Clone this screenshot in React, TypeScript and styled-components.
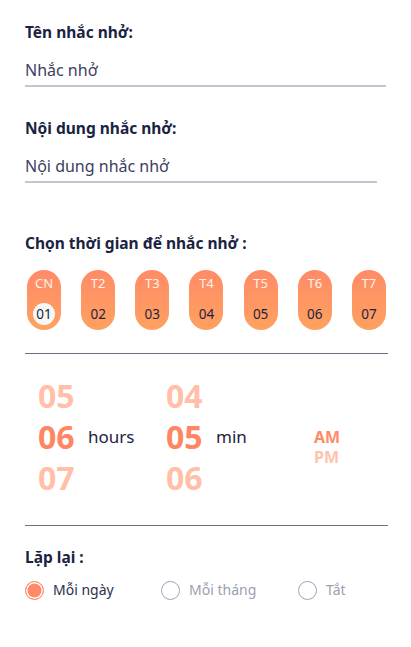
import { useState } from "react";
import styled, { createGlobalStyle } from "styled-components";

const GlobalStyle = createGlobalStyle`
  body {
    margin: 0;
    background: #ffffff;
    font-family: "Noto Sans", "Open Sans", sans-serif;
  }
`;

const Page = styled.div`
  display: flex;
  flex-direction: column;
  padding: 22px 23px 40px 25px;
  width: 411px;
  box-sizing: border-box;
`;

const Label = styled.div<{ $top?: number }>`
  margin-top: ${({ $top }) => $top ?? 0}px;
  font-size: 15.5px;
  line-height: 20px;
  font-weight: 700;
  color: #1a2340;
`;

const TextInput = styled.input<{ $width: number }>`
  margin-top: 17px;
  width: ${({ $width }) => $width}px;
  box-sizing: border-box;
  border: none;
  border-bottom: 2px solid #c3c6d1;
  padding: 0 0 4px 0;
  font-family: inherit;
  font-size: 16px;
  line-height: 22px;
  color: #3a4060;
  outline: none;
  background: transparent;

  &::placeholder {
    color: #3a4060;
  }
`;

const DayRow = styled.div`
  margin-top: 17px;
  display: flex;
  justify-content: space-between;
  padding: 0 2px 0 2px;
`;

const DayPill = styled.button`
  width: 34px;
  height: 60px;
  border: none;
  border-radius: 17px;
  padding: 4px 0 5px 0;
  display: flex;
  flex-direction: column;
  align-items: center;
  justify-content: space-between;
  background: linear-gradient(180deg, #ff8b68 0%, #ffa15f 100%);
  font-family: inherit;
  cursor: pointer;
`;

const DayName = styled.span`
  font-size: 13px;
  line-height: 18px;
  color: #fff1ea;
`;

const DayNumber = styled.span<{ $active: boolean }>`
  width: 22px;
  height: 22px;
  border-radius: 50%;
  display: flex;
  align-items: center;
  justify-content: center;
  font-size: 13.5px;
  color: #1a2340;
  background: ${({ $active }) => ($active ? "#f7f7f7" : "transparent")};
`;

const Divider = styled.hr<{ $top: number }>`
  margin: ${({ $top }) => $top}px 0 0 0;
  width: 363px;
  border: none;
  border-top: 1px solid #6b6f82;
`;

const TimePicker = styled.div`
  margin-top: 21px;
  padding-left: 13px;
  display: flex;
  align-items: center;
`;

const Wheel = styled.div<{ $width: number }>`
  width: ${({ $width }) => $width}px;
  display: flex;
  align-items: center;
`;

const Digits = styled.div`
  display: flex;
  flex-direction: column;
  width: 50px;
`;

const Digit = styled.div<{ $current: boolean }>`
  height: 41px;
  font-size: 32px;
  line-height: 41px;
  font-weight: 700;
  color: ${({ $current }) => ($current ? "#ff8662" : "#ffbfa9")};
`;

const Unit = styled.span`
  font-size: 17px;
  color: #1a2340;
`;

const Meridiem = styled.div`
  display: flex;
  flex-direction: column;
  margin-top: 20px;
`;

const MeridiemItem = styled.div<{ $current: boolean }>`
  height: 20px;
  font-size: 16px;
  line-height: 20px;
  font-weight: 700;
  color: ${({ $current }) => ($current ? "#ff8a6a" : "#ffc2ad")};
`;

const RepeatRow = styled.div`
  margin-top: 13px;
  display: grid;
  grid-template-columns: 136px 137px 1fr;
`;

const RadioOption = styled.label`
  display: flex;
  align-items: center;
  gap: 9px;
  cursor: pointer;
`;

const RadioCircle = styled.span<{ $checked: boolean }>`
  width: 19px;
  height: 19px;
  box-sizing: border-box;
  border-radius: 50%;
  border: 1.5px solid ${({ $checked }) => ($checked ? "#ff8a6a" : "#9ea3b6")};
  background: ${({ $checked }) => ($checked ? "#ff8a6a" : "#ffffff")};
  box-shadow: ${({ $checked }) => ($checked ? "inset 0 0 0 1.5px #ffffff" : "none")};
`;

const RadioText = styled.span<{ $checked: boolean }>`
  font-size: 14px;
  line-height: 20px;
  color: ${({ $checked }) => ($checked ? "#2a3050" : "#9aa0b2")};
`;

const days = ["CN", "T2", "T3", "T4", "T5", "T6", "T7"];
const repeats = ["Mỗi ngày", "Mỗi tháng", "Tắt"];

export default function App() {
  const [day, setDay] = useState(0);
  const [repeat, setRepeat] = useState(0);

  return (
    <Page>
      <GlobalStyle />
      <Label>Tên nhắc nhở:</Label>
      <TextInput $width={361} placeholder="Nhắc nhở" />

      <Label $top={31}>Nội dung nhắc nhở:</Label>
      <TextInput $width={352} placeholder="Nội dung nhắc nhở" />

      <Label $top={50}>Chọn thời gian để nhắc nhở :</Label>
      <DayRow>
        {days.map((name, i) => (
          <DayPill key={name} onClick={() => setDay(i)}>
            <DayName>{name}</DayName>
            <DayNumber $active={day === i}>{`0${i + 1}`}</DayNumber>
          </DayPill>
        ))}
      </DayRow>

      <Divider $top={23} />

      <TimePicker>
        <Wheel $width={128}>
          <Digits>
            <Digit $current={false}>05</Digit>
            <Digit $current>06</Digit>
            <Digit $current={false}>07</Digit>
          </Digits>
          <Unit>hours</Unit>
        </Wheel>
        <Wheel $width={148}>
          <Digits>
            <Digit $current={false}>04</Digit>
            <Digit $current>05</Digit>
            <Digit $current={false}>06</Digit>
          </Digits>
          <Unit>min</Unit>
        </Wheel>
        <Meridiem>
          <MeridiemItem $current>AM</MeridiemItem>
          <MeridiemItem $current={false}>PM</MeridiemItem>
        </Meridiem>
      </TimePicker>

      <Divider $top={27} />

      <Label $top={21}>Lặp lại :</Label>
      <RepeatRow>
        {repeats.map((text, i) => (
          <RadioOption key={text} onClick={() => setRepeat(i)}>
            <RadioCircle $checked={repeat === i} />
            <RadioText $checked={repeat === i}>{text}</RadioText>
          </RadioOption>
        ))}
      </RepeatRow>
    </Page>
  );
}
